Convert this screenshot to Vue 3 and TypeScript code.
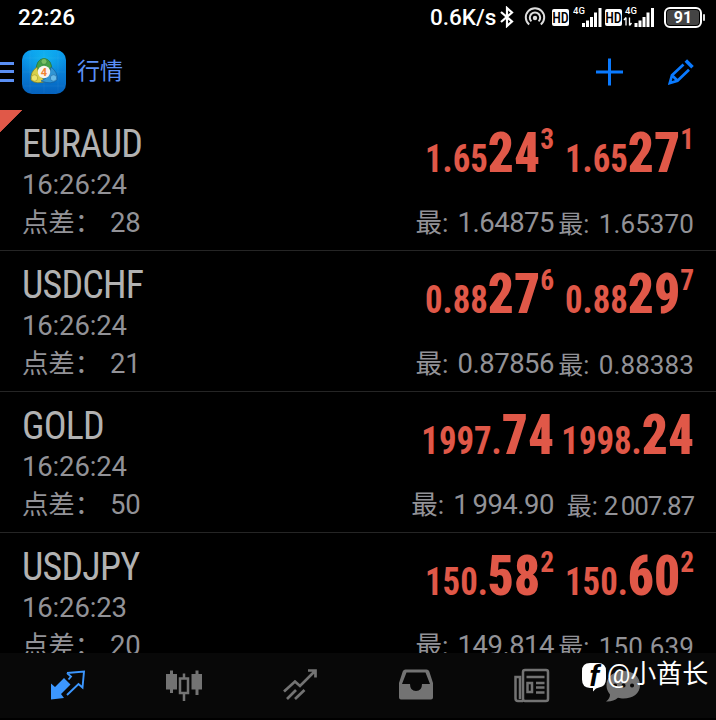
<script setup lang="ts">
import { ref } from 'vue';

interface Price {
    base: string
    big: string
    sup: string
    label: string
    limit: string
}
interface Quote {
    symbol: string
    time: string
    spread: number
    bid: Price
    ask: Price
}

const quotes = ref<Quote[]>([
    {
        symbol: 'EURAUD',
        time: '16:26:24',
        spread: 28,
        bid: { base: '1.65', big: '24', sup: '3', label: '最:', limit: '1.64875' },
        ask: { base: '1.65', big: '27', sup: '1', label: '最:', limit: '1.65370' },
    },
    {
        symbol: 'USDCHF',
        time: '16:26:24',
        spread: 21,
        bid: { base: '0.88', big: '27', sup: '6', label: '最:', limit: '0.87856' },
        ask: { base: '0.88', big: '29', sup: '7', label: '最:', limit: '0.88383' },
    },
    {
        symbol: 'GOLD',
        time: '16:26:24',
        spread: 50,
        bid: { base: '1997.', big: '74', sup: '', label: '最:', limit: '1 994.90' },
        ask: { base: '1998.', big: '24', sup: '', label: '最:', limit: '2 007.87' },
    },
    {
        symbol: 'USDJPY',
        time: '16:26:23',
        spread: 20,
        bid: { base: '150.', big: '58', sup: '2', label: '最:', limit: '149.814' },
        ask: { base: '150.', big: '60', sup: '2', label: '最:', limit: '150.639' },
    },
])
const selected = ref('EURAUD')
const tab = ref('quotes')
</script>

<template>
    <div class="screen">
        <div class="status">
            <span class="clock">22:26</span>
            <span class="speed">0.6K/s</span>
            <svg class="bluetooth" width="14" height="22" viewBox="0 0 14 22">
                <path d="M1 6 L12 15.5 L7 20 V2 L12 6.5 L1 16" fill="none" stroke="#fff" stroke-width="2.2" />
            </svg>
            <svg class="hotspot" width="22" height="20" viewBox="0 0 22 20" fill="none" stroke="#ddd" stroke-width="2">
                <path d="M5.2 17.5 A9.2 9.2 0 1 1 16.8 17.5" />
                <path d="M7.4 14.4 A5.2 5.2 0 1 1 14.6 14.4" />
                <circle cx="11" cy="11" r="2.2" fill="#ddd" stroke="none" />
            </svg>
            <span class="hd">HD</span>
            <svg class="signal" width="30" height="22" viewBox="0 0 30 22" fill="#fff">
                <text x="0" y="8" class="net">4G</text>
                <path d="M9 17h3v4h-3z M13 14.5h3v6.5h-3z M17 11h3v10h-3z M21 6.5h3v14.5h-3z M25.5 2h3v19h-3z" />
            </svg>
            <span class="hd">HD</span>
            <svg class="signal" width="32" height="22" viewBox="0 0 32 22" fill="#fff">
                <text x="2" y="8" class="net">4G</text>
                <path d="M3 11.5v8 M1 14l2-2.5 M6.5 11.5v8 M8.5 17l-2 2.5" stroke="#fff" stroke-width="1.3" fill="none" />
                <path d="M11.5 17h3v4h-3z M15.5 14.5h3v6.5h-3z M19.5 11h3v10h-3z M23.5 6.5h3v14.5h-3z M28 2h3v19h-3z" />
            </svg>
            <div class="battery"><span>91</span></div>
            <i class="battery-tip"></i>
        </div>

        <header class="bar">
            <div class="menu"><i></i><i></i><i></i></div>
            <svg class="logo" width="44" height="44" viewBox="0 0 44 44">
                <defs>
                    <linearGradient id="sky" x1="0" y1="0" x2="0" y2="1">
                        <stop offset="0" stop-color="#0b9df0" />
                        <stop offset="1" stop-color="#0561bd" />
                    </linearGradient>
                    <radialGradient id="glow" cx=".5" cy=".2" r=".5">
                        <stop offset="0" stop-color="#13c0f2" stop-opacity=".7" />
                        <stop offset="1" stop-color="#13c0f2" stop-opacity="0" />
                    </radialGradient>
                </defs>
                <rect width="44" height="44" rx="10" fill="url(#sky)" />
                <rect width="44" height="44" rx="10" fill="url(#glow)" />
                <path d="M8 1v42M22 1v42M36 1v42M1 8h42M1 22h42M1 36h42" stroke="#fff" stroke-opacity=".05" />
                <path d="M14 21 Q14 9 22 8.5 Q30 9 30 21 Q22 15 14 21z" fill="#43a047" stroke="#226f35" stroke-width=".7" />
                <path d="M15 17 Q8 22 9 30 Q14 35 25 31 Q17 28 15 17z" fill="#d8d04a" stroke="#857d1c" stroke-width=".7" />
                <path d="M29 17 Q36 22 35 30 Q30 35 19 31 Q27 28 29 17z" fill="#3195d3" stroke="#155d9b" stroke-width=".7" />
                <circle cx="22" cy="11.5" r="3" fill="#77bf63" stroke="#226f35" stroke-width=".5" />
                <circle cx="12.5" cy="28" r="3.2" fill="#ede56d" stroke="#918823" stroke-width=".5" />
                <circle cx="31.5" cy="28" r="3.2" fill="#68bbe8" stroke="#155d9b" stroke-width=".5" />
                <circle cx="22" cy="22" r="6.2" fill="#f8f4ef" />
                <text x="22" y="26" class="four">4</text>
            </svg>
            <h1>行情</h1>
            <svg class="add" width="28" height="28" viewBox="0 0 28 28">
                <path d="M14.5 .5v27M1 14h27" stroke="#0a7aff" stroke-width="3" />
            </svg>
            <svg class="edit" width="26" height="26" viewBox="0 0 26 26" fill="none" stroke="#0a7aff" stroke-width="2.7">
                <path d="M15.5 5.5 L4 16.2 L1.8 24 L9.5 21.8 L21 10.8 M4 16.2 L9.5 21.8" />
                <path d="M17.8 1.5 L24.5 8.3" stroke-width="3.5" />
            </svg>
        </header>

        <ul class="quotes">
            <li v-for="item in quotes" :key="item.symbol" :class="{ selected: item.symbol === selected }" @click="selected = item.symbol">
                <div class="info">
                    <div class="symbol">{{ item.symbol }}</div>
                    <div class="time">{{ item.time }}</div>
                    <div class="spread"><span>点差：</span>{{ item.spread }}</div>
                </div>
                <div class="price bid">
                    <div class="value">{{ item.bid.base }}<b>{{ item.bid.big }}</b><sup v-if="item.bid.sup">{{ item.bid.sup }}</sup></div>
                    <div class="limit" :class="{ long: item.bid.limit.length > 7 }"><span>{{ item.bid.label }}</span>{{ item.bid.limit }}</div>
                </div>
                <div class="price ask">
                    <div class="value">{{ item.ask.base }}<b>{{ item.ask.big }}</b><sup v-if="item.ask.sup">{{ item.ask.sup }}</sup></div>
                    <div class="limit" :class="{ long: item.ask.limit.length > 7 }"><span>{{ item.ask.label }}</span>{{ item.ask.limit }}</div>
                </div>
            </li>
        </ul>

        <nav class="tabs">
            <button :class="{ active: tab === 'quotes' }" @click="tab = 'quotes'">
                <svg width="36" height="36" viewBox="0 0 36 36">
                    <path d="M1 15.5 L5 19 L14 10 L20.5 16.5 L11 26 L14 30 L1 31.5z" fill="currentColor" />
                    <path d="M17 5 L34 3.5 L32.5 19.5 L28.5 16 L17 27 M17 5 L21 8.5 L18.5 11.5" fill="none" stroke="currentColor" stroke-width="1.9" />
                </svg>
            </button>
            <button :class="{ active: tab === 'chart' }" @click="tab = 'chart'">
                <svg width="36" height="36" viewBox="0 0 36 36" fill="currentColor">
                    <path d="M0 6h4V2.500h3V6h4v15.500H7V25H4v-3.500H0z M25.500 6h4V2.500h3V6h4v15.500h-4V27h-3v-5.500h-4z" />
                    <path d="M14 10.500h8V25h-8z M18 5.500v5 M18 25v8" fill="none" stroke="currentColor" stroke-width="2.5" />
                </svg>
            </button>
            <button :class="{ active: tab === 'trade' }" @click="tab = 'trade'">
                <svg width="36" height="36" viewBox="0 0 36 36" fill="none" stroke="currentColor" stroke-width="2.7">
                    <path d="M2 23.5 L13 13.5 L18 18 L33 3 M26 2.5 H33.5 V9.5 M5 31 L14 22 M13 31 L22.5 22" />
                </svg>
            </button>
            <button :class="{ active: tab === 'history' }" @click="tab = 'history'">
                <svg width="36" height="36" viewBox="0 0 36 36">
                    <path fill-rule="evenodd" fill="currentColor" d="M7.5 1.5h21q2 0 2.8 2L35 15v14.5q0 2-2 2H3q-2 0-2-2V15L4.7 3.5q.8-2 2.800-2z M8.5 4.5L4 16h8q0 7 6 7t6-7h8L27.5 4.5z" />
                </svg>
            </button>
            <button :class="{ active: tab === 'news' }" @click="tab = 'news'">
                <svg width="36" height="36" viewBox="0 0 36 36" fill="none" stroke="currentColor" stroke-width="2.5">
                    <rect x="9" y="2" width="25" height="31" rx="2" />
                    <path d="M9 33H4q-2.5 0-2.5-2.5V9H6v22 M12.5 9h18 M22 15h8.5 M22 19.5h8.5 M22 24.5h8.5" />
                    <rect x="13.5" y="15" width="4.5" height="9" />
                </svg>
            </button>
            <button class="chat" :class="{ active: tab === 'chat' }" @click="tab = 'chat'">
                <svg width="36" height="36" viewBox="0 0 36 36">
                    <path d="M18.5 3C28 3 35 8.5 35 17s-7 13.5-16.5 13.5c-2 0-4-.2-5.5-.7Q8 34 1 33.5Q5 30.5 5 26.5Q1.5 22.5 1.5 17C1.5 8.5 9 3 18.5 3z" fill="currentColor" />
                    <path d="M10 17.5h.1M18.5 17.5h.1M27 17.5h.1" stroke="#090909" stroke-width="4" stroke-linecap="round" />
                </svg>
            </button>
        </nav>

        <div class="watermark">
            <svg width="26" height="30" viewBox="0 0 26 30">
                <path d="M9 1h8q8 0 8 8v8q0 7.500-7 8.500L15 26.500l-3 3V26H9Q1 25.500 1 17.500V9Q1 1 9 1z" fill="#fff" />
                <text x="13" y="24" class="mark">f</text>
            </svg>
            <span>@小酋长</span>
        </div>
    </div>
</template>

<style>
body {
    background: #000;
    overflow: hidden;
}
</style>

<style scoped>
.screen {
    position: relative;
    width: 716px;
    height: 720px;
    overflow: hidden;
    display: flex;
    flex-direction: column;
    background: #000;
    color: #fff;
    font-family: Roboto, "Noto Sans CJK SC", sans-serif;
}
.status {
    height: 34px;
    flex: none;
    display: flex;
    align-items: center;
    box-sizing: border-box;
    padding-left: 18px;
    font-size: 22.5px;
    font-weight: 500;
    & .clock {
        width: 412px;
    }
    & .speed {
        width: 70px;
    }
    & .hotspot {
        margin-left: 10px;
    }
    & .hd {
        width: 17px;
        height: 17px;
        margin-left: 6px;
        border-radius: 2px;
        background: #fff;
        color: #000;
        font: 500 14px/18px "Roboto Condensed", Roboto, sans-serif;
        text-align: center;
    }
    & .signal {
        margin-left: 4px;
        & + .hd {
            margin-left: 2px;
        }
    }
    & .hd + .signal:last-of-type {
        margin-left: 1px;
    }
    & .net {
        font: 500 9.5px Roboto, sans-serif;
    }
    & .battery {
        width: 38px;
        height: 21px;
        box-sizing: border-box;
        margin-left: 9px;
        padding: 1px;
        border: 2px solid #fff;
        border-radius: 6px;
        & span {
            display: block;
            height: 15px;
            border-radius: 3px;
            background: #444;
            font: 700 16px/16px Roboto, sans-serif;
            text-align: center;
        }
    }
    & .battery-tip {
        width: 2px;
        height: 7px;
        margin-left: 1px;
        border-radius: 1px;
        background: #ddd;
    }
}
.bar {
    height: 76px;
    flex: none;
    display: flex;
    align-items: center;
    box-sizing: border-box;
    padding-bottom: 1px;
    & .menu {
        width: 14px;
        height: 20px;
        display: flex;
        flex-direction: column;
        justify-content: space-between;
        & i {
            height: 3px;
            background: #5a8ff5;
        }
    }
    & .logo {
        margin-left: 8px;
    }
    & .four {
        fill: #f08332;
        font: 700 11px Roboto, sans-serif;
        text-anchor: middle;
    }
    & h1 {
        flex: 1;
        margin: 1px 0 0 11px;
        color: #5a8ff5;
        font-size: 23px;
        line-height: 30px;
        font-weight: 400;
    }
    & .add {
        margin-right: 45px;
    }
    & .edit {
        margin-right: 22px;
    }
}
.quotes {
    flex: 1;
    min-height: 0;
    overflow: hidden;
    margin: 0;
    padding: 0;
    list-style: none;
    & li {
        height: 141px;
        box-sizing: border-box;
        display: flex;
        padding: 12px 22px 0;
        border-bottom: 1px solid #252525;
        color: #929297;
        font-size: 27.5px;
        font-weight: 400;
        letter-spacing: -.15px;
    }
    & .selected {
        background: linear-gradient(135deg, #e05848 15.5px, transparent 16px);
    }
    & .info {
        flex: 1;
    }
    & .symbol {
        color: #b2b2b2;
        font-family: "Roboto Condensed", Roboto, sans-serif;
        font-size: 38px;
        letter-spacing: -.8px;
        line-height: 44px;
    }
    & .time {
        line-height: 37px;
    }
    & .spread {
        line-height: 40px;
        & span {
            display: inline-block;
            width: 88px;
            font-size: 26.5px;
            font-weight: 400;
        }
    }
    & .price {
        display: flex;
        flex-direction: column;
        align-items: flex-end;
        width: 140px;
        white-space: nowrap;
    }
    & .value {
        height: 80px;
        padding-top: 1px;
        box-sizing: border-box;
        color: #e05848;
        font-family: "Roboto Condensed", Roboto, sans-serif;
        font-size: 38px;
        font-weight: 700;
        letter-spacing: 0;
        line-height: 60px;
        transform: scaleX(.915);
        transform-origin: right;
        & b {
            font-size: 56px;
        }
        & sup {
            font-size: 30px;
            line-height: 0;
            vertical-align: 23px;
        }
    }
    & .limit {
        padding-top: 1px;
        line-height: 39px;
        letter-spacing: -.5px;
        & span {
            display: inline-block;
            width: 42px;
            font-size: 26.5px;
            font-weight: 400;
            letter-spacing: 0;
        }
        &.long {
            word-spacing: -2px;
        }
    }
    & .ask .limit {
        padding-top: 3px;
        font-size: 26px;
        line-height: 38px;
        letter-spacing: .1px;
        & span {
            width: 40.5px;
            font-size: 25px;
        }
        &.long {
            letter-spacing: -1.1px;
            & span {
                width: 37px;
                letter-spacing: 0;
            }
        }
    }
}
.tabs {
    height: 65px;
    flex: none;
    display: flex;
    box-sizing: border-box;
    margin-bottom: 2px;
    padding-left: 10px;
    background: #080808;
    & button {
        width: 116px;
        padding: 0;
        border: none;
        background: none;
        color: #737373;
        line-height: 0;
    }
    & .active {
        color: #3c97ff;
    }
    & .chat {
        width: 66px;
    }
}
.watermark {
    position: absolute;
    left: 581px;
    top: 656px;
    display: flex;
    align-items: center;
    font-size: 26px;
    line-height: 36px;
    white-space: nowrap;
    & svg {
        flex: none;
        margin-top: 5px;
    }
    & .mark {
        fill: #000;
        font: italic 700 29px "Liberation Sans", sans-serif;
        text-anchor: middle;
    }
}
</style>
